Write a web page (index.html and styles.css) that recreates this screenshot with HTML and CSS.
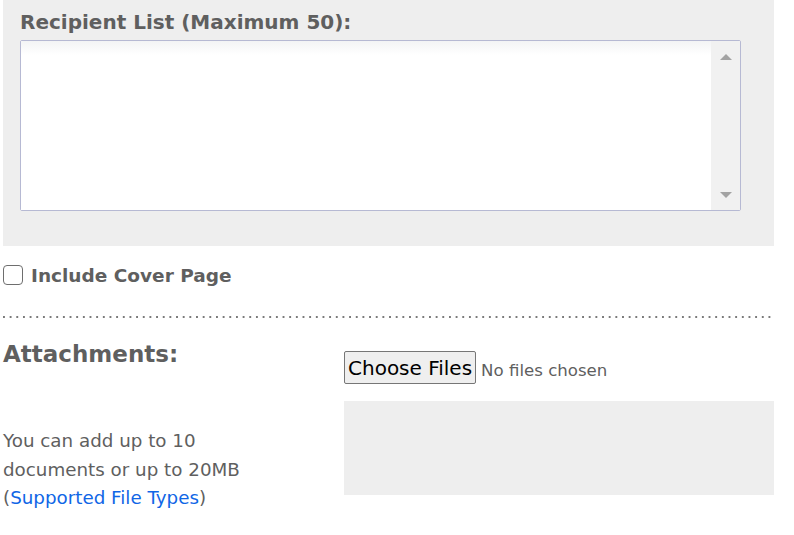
FILE: index.html
```html
<!DOCTYPE html>
<html lang="en">
<head>
<meta charset="utf-8">
<title>Recipients and attachments</title>
<link rel="stylesheet" href="styles.css">
</head>
<body>
<div class="page">
  <section class="panel">
    <label class="panel-label" for="recipients">Recipient List (Maximum 50):</label>
    <div class="list-box">
      <div id="recipients" class="list-body"></div>
      <div class="scrollbar">
        <span class="arrow arrow-up"></span>
        <span class="arrow arrow-down"></span>
      </div>
    </div>
  </section>

  <label class="cover-row">
    <input type="checkbox" class="check">
    <span class="cover-text">Include Cover Page</span>
  </label>

  <div class="divider"></div>

  <section class="attachments">
    <div class="attach-info">
      <h2 class="attach-title">Attachments:</h2>
      <p class="attach-note">You can add up to 10 documents or up to 20MB <span class="nowrap">(<a href="#" class="link">Supported File Types</a>)</span></p>
    </div>
    <div class="attach-files">
      <div class="file-row">
        <button type="button" class="file-btn">Choose Files</button>
        <span class="file-status">No files chosen</span>
      </div>
      <div class="drop-area"></div>
    </div>
  </section>
</div>
</body>
</html>
```

FILE: styles.css
```css
html, body {
  margin: 0;
  padding: 0;
  background: #ffffff;
}

body {
  font-family: "DejaVu Sans", Verdana, sans-serif;
  color: #5f5f5f;
}

.page {
  width: 771px;
  margin-left: 3px;
}

.panel {
  background: #eeeeee;
  padding: 9px 33px 35px 17px;
  display: flex;
  flex-direction: column;
}

.panel-label {
  font-weight: bold;
  font-size: 20px;
  line-height: 26px;
  height: 31px;
  display: block;
  white-space: nowrap;
}

.list-box {
  display: flex;
  height: 169px;
  border: 1px solid #b6b9d3;
  border-radius: 2px;
  background: #ffffff;
  box-shadow: inset 0 3px 6px rgba(0, 0, 0, 0.06);
}

.list-body {
  flex: 1;
  background: linear-gradient(#f3f4f5 0, #ffffff 14px);
}

.scrollbar {
  width: 29px;
  background: #f1f1f1;
  display: flex;
  flex-direction: column;
  justify-content: space-between;
  align-items: center;
  padding: 13px 0 12px;
}

.arrow {
  width: 0;
  height: 0;
  border-left: 6px solid transparent;
  border-right: 6px solid transparent;
}

.arrow-up {
  border-bottom: 6px solid #a3a3a3;
}

.arrow-down {
  border-top: 6px solid #a3a3a3;
}

.cover-row {
  display: flex;
  align-items: center;
  gap: 8px;
  margin-top: 18px;
  height: 22px;
}

.check {
  appearance: none;
  -webkit-appearance: none;
  margin: 0;
  width: 20px;
  height: 20px;
  border: 1.5px solid #6e6e6e;
  border-radius: 4px;
  background: #ffffff;
  box-sizing: border-box;
}

.cover-text {
  font-weight: bold;
  font-size: 18.5px;
}

.divider {
  margin-top: 30px;
  height: 2px;
  background-image: linear-gradient(to right, #7a7a7a 0, #7a7a7a 2px, transparent 2px);
  background-size: 6.67px 2px;
  background-repeat: repeat-x;
}

.attachments {
  display: grid;
  grid-template-columns: 341px 430px;
  margin-top: 22px;
}

.attach-title {
  margin: 0;
  font-size: 23px;
  line-height: 28px;
  font-weight: bold;
}

.attach-note {
  margin: 59px 0 0;
  font-size: 18.3px;
  line-height: 28.5px;
  width: 250px;
}

.nowrap {
  white-space: nowrap;
}

.link {
  color: #1066e6;
  text-decoration: none;
}

.file-row {
  display: flex;
  align-items: center;
  gap: 5px;
  margin-top: 11px;
}

.file-btn {
  font-family: "DejaVu Sans", Verdana, sans-serif;
  font-size: 20px;
  color: #000000;
  background: #efefef;
  border: 1px solid #767676;
  border-radius: 2px;
  height: 33px;
  padding: 1px 3px 0;
  margin: 0;
}

.file-status {
  font-size: 16.6px;
  color: #5f5f5f;
  padding-top: 5px;
}

.drop-area {
  margin-top: 17px;
  height: 94px;
  background: #eeeeee;
}
```
